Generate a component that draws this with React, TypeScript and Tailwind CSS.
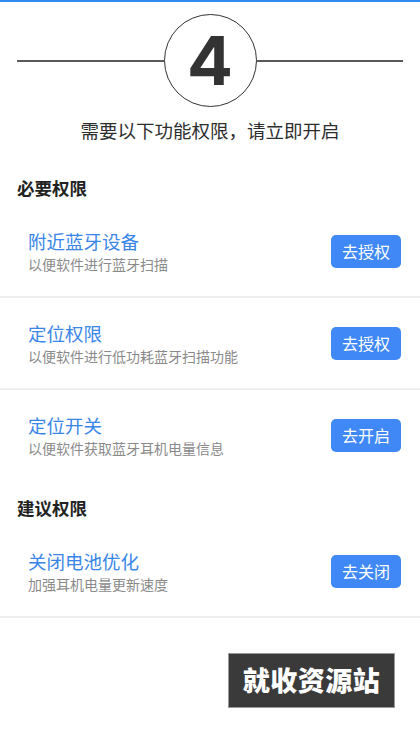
const cjk = { fontFamily: '"Noto Sans CJK SC", "Noto Sans", sans-serif' }

type Perm = { title: string; desc: string; action: string; divider: boolean }

const required: Perm[] = [
  { title: '附近蓝牙设备', desc: '以便软件进行蓝牙扫描', action: '去授权', divider: true },
  { title: '定位权限', desc: '以便软件进行低功耗蓝牙扫描功能', action: '去授权', divider: true },
  { title: '定位开关', desc: '以便软件获取蓝牙耳机电量信息', action: '去开启', divider: false },
]

const suggested: Perm[] = [
  { title: '关闭电池优化', desc: '加强耳机电量更新速度', action: '去关闭', divider: true },
]

function PermRow({ item }: { item: Perm }) {
  return (
    <div>
      <div className="h-[90px] flex items-center justify-between pl-[28px] pr-[19px]">
        <div>
          <div className="text-[18.5px] leading-[24px] text-[#3a86e8]">{item.title}</div>
          <div className="mt-[1px] text-[14px] leading-[20px] text-[#8a8a8a]">{item.desc}</div>
        </div>
        <button className="w-[70px] h-[33px] rounded-[5px] bg-[#4088f5] text-white text-[16px] leading-none">
          {item.action}
        </button>
      </div>
      {item.divider && <div className="h-[2px] bg-[#efefef]" />}
    </div>
  )
}

export default function App() {
  return (
    <div className="w-[420px] h-[746px] bg-white overflow-hidden" style={cjk}>
      <div className="h-[2px] bg-[#2d8cf0]" />

      <div className="mt-[12px] px-[17px] flex items-center">
        <div className="flex-1 h-[2px] bg-[#5a5a5a]" />
        <div className="w-[93px] h-[93px] rounded-full border-[1.5px] border-[#333] flex items-center justify-center">
          <span
            className="text-[68px] leading-none font-bold text-[#333] -mt-[1px]"
            style={{ fontFamily: 'Inter, "DejaVu Sans", sans-serif' }}
          >
            4
          </span>
        </div>
        <div className="flex-1 h-[2px] bg-[#5a5a5a]" />
      </div>

      <p className="mt-[10px] text-center text-[18.5px] leading-[26px] text-[#2e2e2e]">
        需要以下功能权限，请立即开启
      </p>

      <div className="mt-[27px] h-[36px] flex items-center pl-[17px] text-[17.5px] font-bold text-[#222]">
        必要权限
      </div>
      {required.map((p) => (
        <PermRow key={p.title} item={p} />
      ))}

      <div className="mt-[10px] h-[36px] flex items-center pl-[17px] text-[17.5px] font-bold text-[#222]">
        建议权限
      </div>
      {suggested.map((p) => (
        <PermRow key={p.title} item={p} />
      ))}

      <div className="mt-[35px] flex justify-end pr-[25px]">
        <div className="w-[167px] h-[55px] bg-[#3a3a3a] border border-[#9a9a9a] flex items-center justify-center">
          <span className="text-[27px] font-black text-white tracking-[0.5px]">就收资源站</span>
        </div>
      </div>
    </div>
  )
}
